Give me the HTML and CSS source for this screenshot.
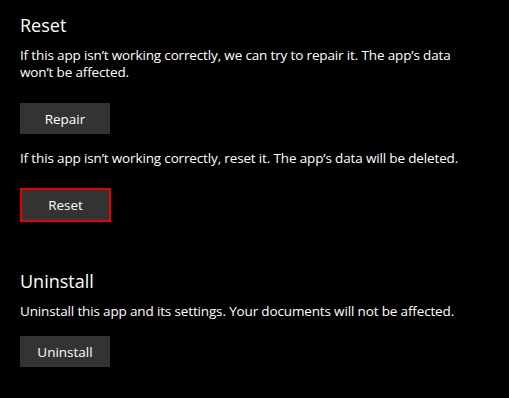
FILE: index.html
```html
<!DOCTYPE html>
<html>
<head>
<meta charset="utf-8">
<link rel="stylesheet" href="styles.css">
</head>
<body>
<main class="page">
  <section class="section">
    <h2 class="title">Reset</h2>
    <p class="desc">If this app isn’t working correctly, we can try to repair it. The app’s data won’t be affected.</p>
    <button class="btn">Repair</button>
    <p class="desc desc-2">If this app isn’t working correctly, reset it. The app’s data will be deleted.</p>
    <button class="btn btn-focus">Reset</button>
  </section>
  <section class="section section-2">
    <h2 class="title">Uninstall</h2>
    <p class="desc">Uninstall this app and its settings. Your documents will not be affected.</p>
    <button class="btn">Uninstall</button>
  </section>
</main>
</body>
</html>
```
FILE: styles.css
```css
html, body {
  margin: 0;
  padding: 0;
  background: #000;
}
.page {
  padding: 13px 20px 0 20px;
  font-family: "Open Sans", "Noto Sans", sans-serif;
  color: #fff;
}
.section {
  display: flex;
  flex-direction: column;
  align-items: flex-start;
}
.section-2 {
  margin-top: 47px;
}
.title {
  margin: 0;
  font-size: 18px;
  font-weight: 400;
  line-height: 24px;
}
.desc {
  margin: 10px 0 0 0;
  font-size: 13.5px;
  line-height: 17px;
  max-width: 440px;
  letter-spacing: -0.15px;
}
.desc-2 {
  margin-top: 16px;
}
.btn {
  margin-top: 22px;
  width: 90px;
  height: 31px;
  background: #333;
  color: #fff;
  border: none;
  padding: 0;
  font-family: inherit;
  font-size: 13.5px;
}
.desc-2 + .btn {
  margin-top: 21px;
}
.section-2 .btn {
  margin-top: 16px;
}
.btn-focus {
  width: 91px;
  height: 34px;
  border: 2px solid #e60000;
}
```
